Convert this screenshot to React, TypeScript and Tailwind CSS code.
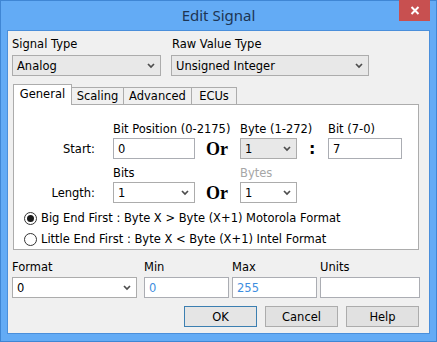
import React from "react";

const F = { fontFamily: '"DejaVu Sans", Verdana, sans-serif' };

function Chevron() {
  return (
    <svg width="8" height="6" viewBox="0 0 8 6" className="shrink-0">
      <polyline points="1,1 4,4 7,1" fill="none" stroke="#4d4d4d" strokeWidth="1.7" />
    </svg>
  );
}

function Select({ w, value, gray }: { w: string; value: string; gray?: boolean }) {
  return (
    <div
      className={`${w} h-[21px] flex items-center justify-between border pl-[4px] pr-[5px] ${
        gray ? "bg-[#e8e8e8] border-[#acacac]" : "bg-white border-[#acacac]"
      }`}
    >
      <span className="text-[11.5px] leading-[14px] text-black">{value}</span>
      <Chevron />
    </div>
  );
}

function Input({ w, value, blue }: { w: string; value: string; blue?: boolean }) {
  return (
    <div className={`${w} h-[21px] flex items-center border border-[#abadb3] bg-white pl-[4px]`}>
      <span className={`text-[11.5px] leading-[14px] ${blue ? "text-[#3d8ee0]" : "text-black"}`}>{value}</span>
    </div>
  );
}

function Or() {
  return (
    <span
      className="text-[18px] leading-[20px] font-bold text-black"
      style={{ fontFamily: '"Liberation Serif", "Times New Roman", serif' }}
    >
      Or
    </span>
  );
}

function Radio({ checked, label }: { checked?: boolean; label: string }) {
  return (
    <div className="h-[20px] flex items-center">
      <div className="ml-[10px] w-[13px] h-[13px] rounded-full border border-[#333333] bg-white flex items-center justify-center">
        {checked && <div className="w-[7px] h-[7px] rounded-full bg-[#1a1a1a]" />}
      </div>
      <span className="ml-[4px] text-[11.5px] leading-[14px] text-black">{label}</span>
    </div>
  );
}

function Button({ label, def }: { label: string; def?: boolean }) {
  return (
    <div
      className={`w-[73px] h-[21px] flex items-center justify-center border ${
        def ? "border-[#3c7fb1] bg-[#e5e5e5]" : "border-[#acacac] bg-[#e1e1e1]"
      }`}
    >
      <span className="text-[11.5px] leading-[14px] text-black">{label}</span>
    </div>
  );
}

export default function App() {
  return (
    <div
      className="relative w-[437px] h-[342px] border border-[#3f86d4] bg-[#63abf5] pt-[29px] pl-[6px] pr-[6px] pb-[7px]"
      style={F}
    >
      {/* title */}
      <div className="absolute left-0 right-0 top-[5px] flex justify-center">
        <span
          className="text-[15px] leading-[18px] text-[#1d3553]"
          style={{ fontFamily: '"Noto Sans", "Open Sans", sans-serif' }}
        >
          Edit Signal
        </span>
      </div>
      <div className="absolute left-[398px] top-[-1px] w-[31px] h-[21px] bg-[#c85050] flex items-center justify-center">
        <svg width="10" height="9" viewBox="0 0 10 9">
          <path d="M1.5 1 L8.5 8 M8.5 1 L1.5 8" stroke="white" strokeWidth="2" />
        </svg>
      </div>

      {/* content */}
      <div className="w-[423px] h-[304px] border border-[#4a8fdb] bg-[#f0f0f0] flex flex-col">
        {/* top labels */}
        <div className="flex pt-[6px] text-[11.5px] leading-[14px] text-black">
          <span className="ml-[4px] w-[160px]">Signal Type</span>
          <span>Raw Value Type</span>
        </div>
        <div className="flex mt-[4px]">
          <div className="ml-[4px]">
            <Select w="w-[149px]" value="Analog" gray />
          </div>
          <div className="ml-[10px]">
            <Select w="w-[198px]" value="Unsigned Integer" gray />
          </div>
        </div>

        {/* tabs */}
        <div className="flex items-end h-[20px] mt-[8px] ml-[5px]">
          <div className="relative z-10 w-[59px] h-[21px] -mb-px border border-b-0 border-[#acacac] bg-white flex items-start justify-center pt-[2px]">
            <span className="text-[11.5px] leading-[14px] text-black">General</span>
          </div>
          <div className="w-[52px] h-[17px] border border-l-0 border-b-0 border-[#acacac] bg-[#f0f0f0] flex items-center justify-center">
            <span className="text-[11.5px] leading-[14px] text-black">Scaling</span>
          </div>
          <div className="w-[68px] h-[17px] border border-l-0 border-b-0 border-[#acacac] bg-[#f0f0f0] flex items-center justify-center">
            <span className="text-[11.5px] leading-[14px] text-black">Advanced</span>
          </div>
          <div className="w-[45px] h-[17px] border border-l-0 border-b-0 border-[#acacac] bg-[#f0f0f0] flex items-center justify-center">
            <span className="text-[11.5px] leading-[14px] text-black">ECUs</span>
          </div>
        </div>

        {/* tab panel */}
        <div className="ml-[5px] w-[406px] h-[146px] border border-[#acacac] bg-white flex flex-col">
          <div className="flex pt-[17px] text-[11.5px] leading-[14px] text-black">
            <span className="w-[99px]" />
            <span className="w-[127px] whitespace-nowrap">Bit Position (0-2175)</span>
            <span className="w-[88px]">Byte (1-272)</span>
            <span>Bit (7-0)</span>
          </div>
          <div className="flex items-center mt-[2px]">
            <span className="w-[99px] pr-[18px] text-right text-[11.5px] leading-[14px] text-black">Start:</span>
            <Input w="w-[82px]" value="0" />
            <div className="w-[45px] pl-[11px] flex items-center">
              <Or />
            </div>
            <Select w="w-[57px]" value="1" gray />
            <div className="w-[31px] pl-[12px] flex items-center">
              <span className="text-[16px] leading-[18px] font-bold text-black">:</span>
            </div>
            <Input w="w-[74px]" value="7" />
          </div>
          <div className="flex mt-[7px] text-[11.5px] leading-[14px]">
            <span className="w-[99px]" />
            <span className="w-[127px] text-black">Bits</span>
            <span className="text-[#a6a6a6]">Bytes</span>
          </div>
          <div className="flex items-center mt-[2px]">
            <span className="w-[99px] pr-[18px] text-right text-[11.5px] leading-[14px] text-black">Length:</span>
            <Select w="w-[82px]" value="1" />
            <div className="w-[45px] pl-[11px] flex items-center">
              <Or />
            </div>
            <Select w="w-[57px]" value="1" />
          </div>
          <div className="mt-[5px]">
            <Radio checked label="Big End First : Byte X > Byte (X+1) Motorola Format" />
          </div>
          <div className="mt-[1px]">
            <Radio label="Little End First : Byte X < Byte (X+1) Intel Format" />
          </div>
        </div>

        {/* bottom */}
        <div className="flex mt-[10px] text-[11.5px] leading-[14px] text-black">
          <span className="ml-[4px] w-[132px]">Format</span>
          <span className="w-[88px]">Min</span>
          <span className="w-[88px]">Max</span>
          <span>Units</span>
        </div>
        <div className="flex mt-[3px]">
          <div className="ml-[4px]">
            <Select w="w-[125px]" value="0" />
          </div>
          <div className="ml-[7px]">
            <Input w="w-[85px]" value="0" blue />
          </div>
          <div className="ml-[3px]">
            <Input w="w-[85px]" value="255" blue />
          </div>
          <div className="ml-[3px]">
            <Input w="w-[100px]" value="" />
          </div>
        </div>
        <div className="flex mt-[8px] ml-[176px] gap-[8px]">
          <Button label="OK" def />
          <Button label="Cancel" />
          <Button label="Help" />
        </div>
      </div>
    </div>
  );
}
